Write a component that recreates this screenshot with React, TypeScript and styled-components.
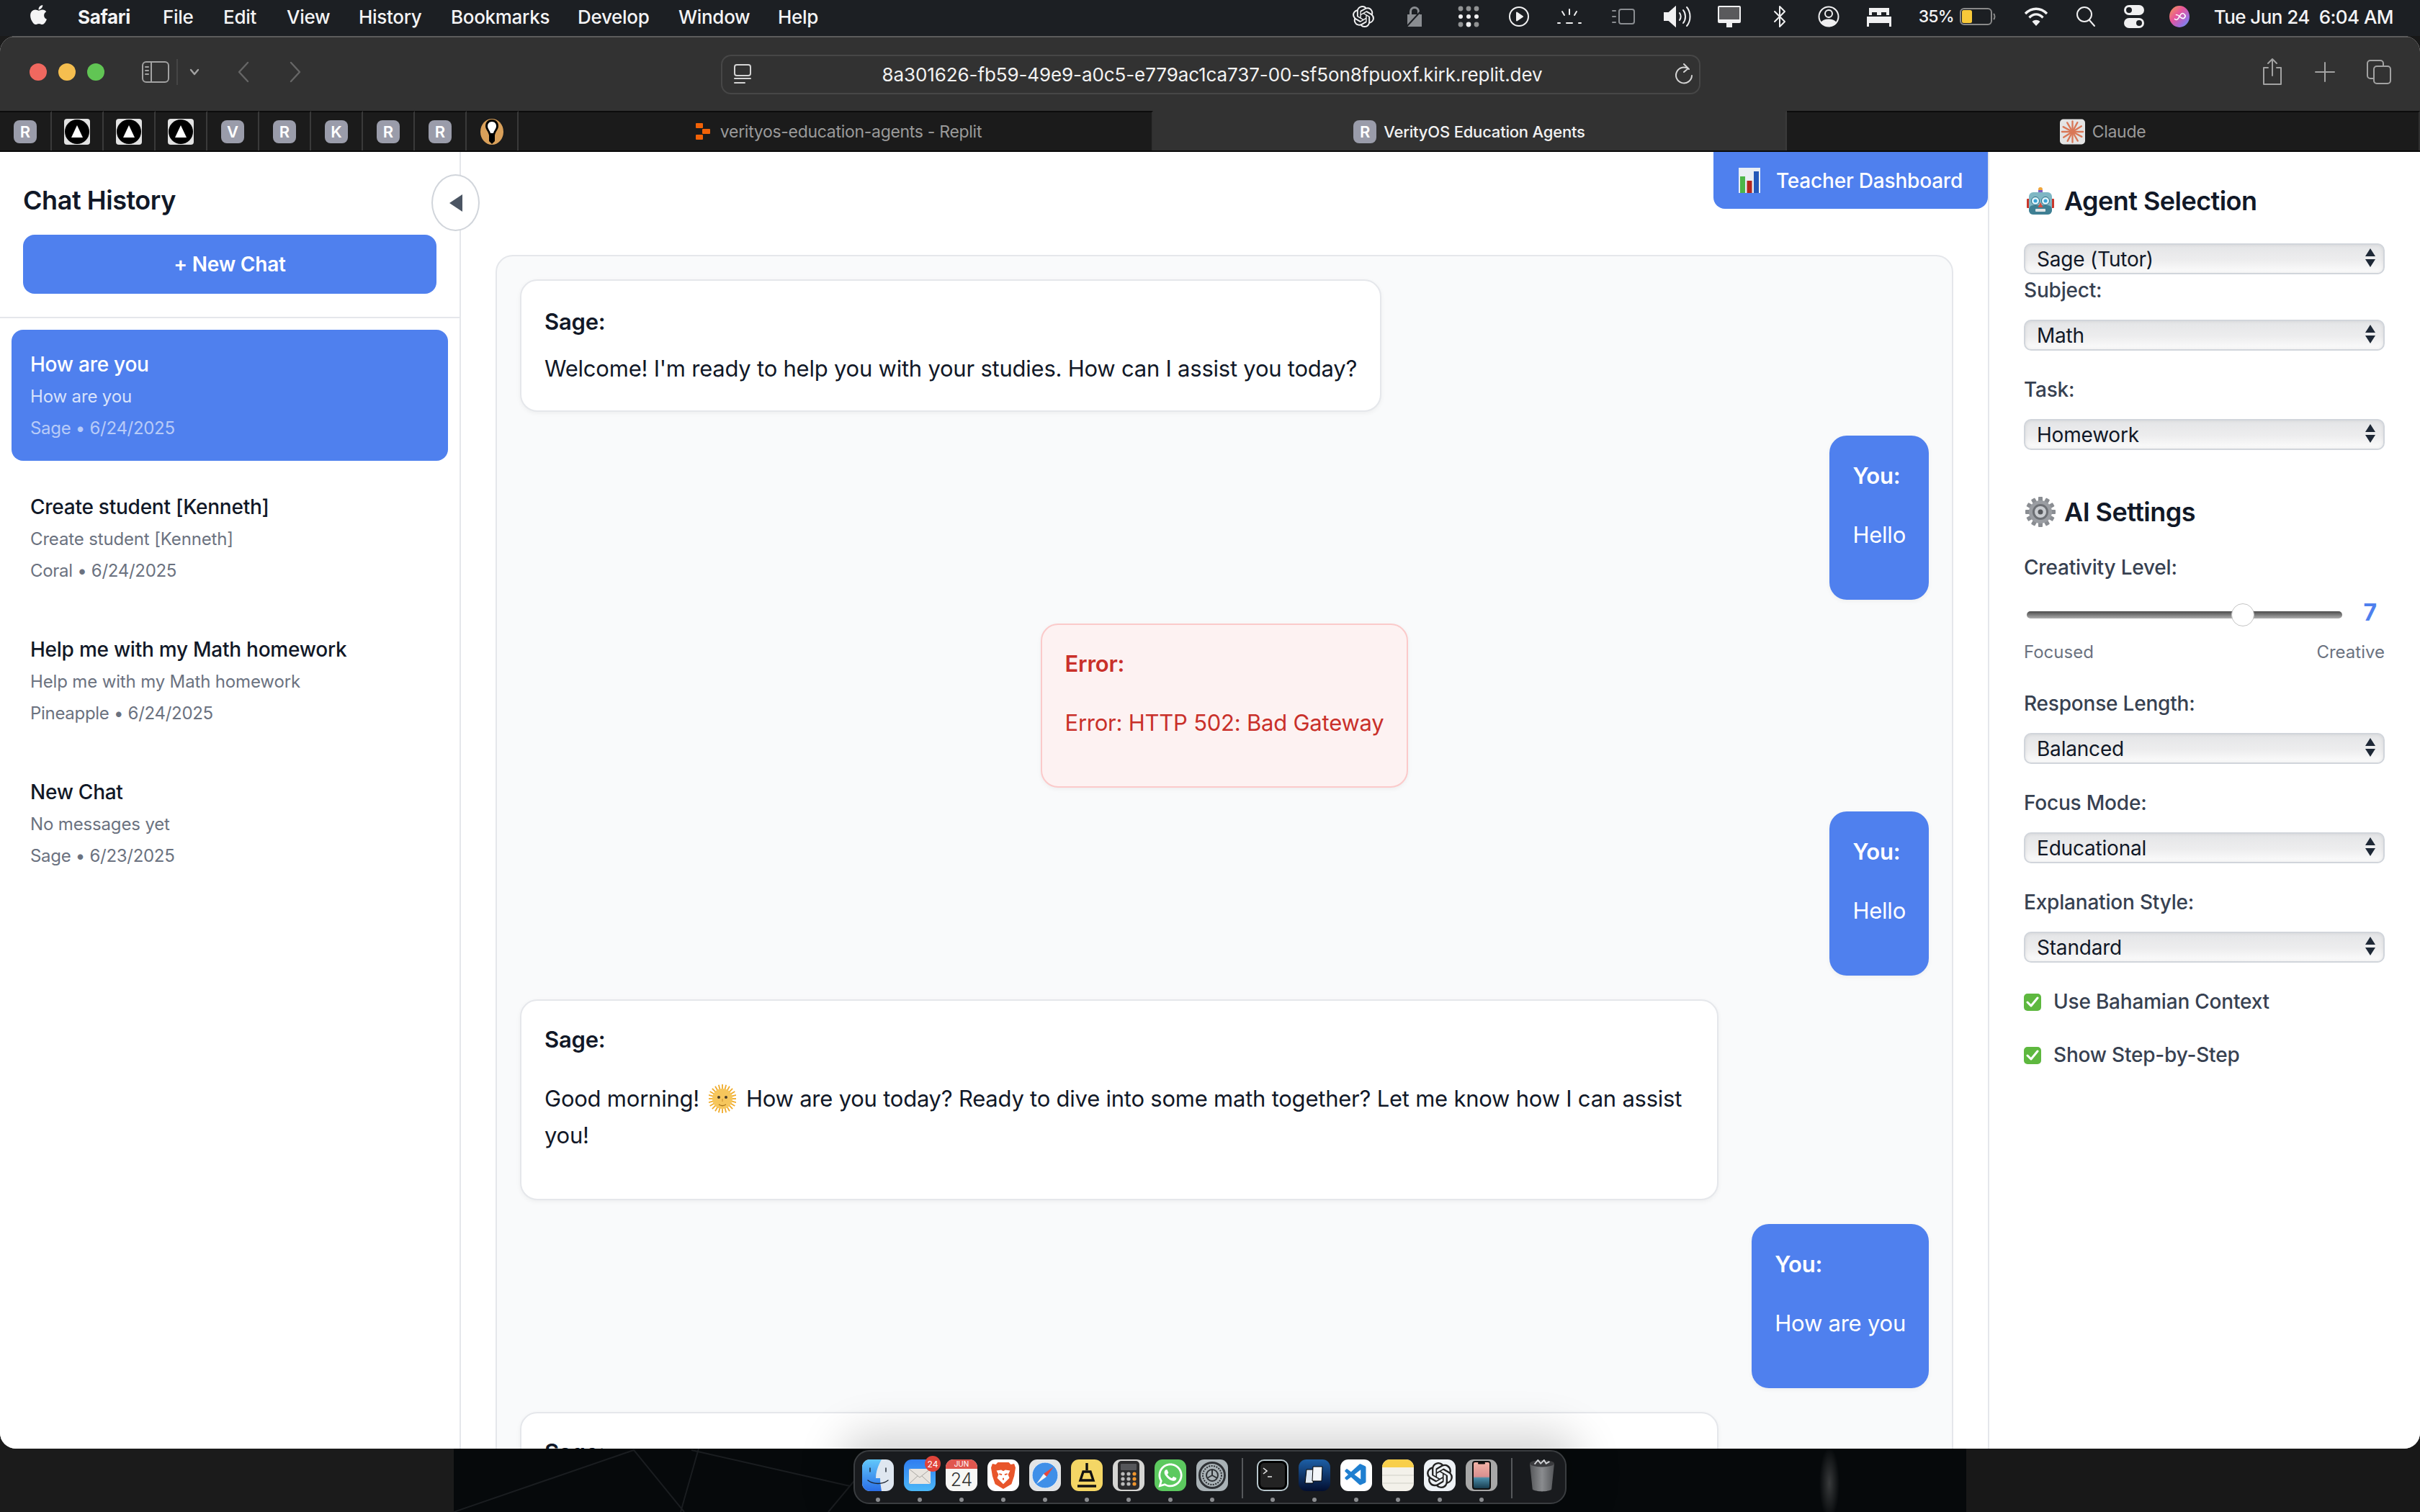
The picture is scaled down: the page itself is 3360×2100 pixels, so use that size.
// App.tsx

import React from "react"
import styled, { createGlobalStyle } from "styled-components"
import { FaApple, FaWhatsapp } from "react-icons/fa"
import { SiOpenai } from "react-icons/si"
import { VscVscode } from "react-icons/vsc"

const BLUE = "#4f80ee"

const GlobalStyle = createGlobalStyle`
  html, body {
    margin: 0;
    padding: 0;
    background: #0b0d10;
  }
  * {
    box-sizing: border-box;
  }
  body {
    font-family: Inter, "Noto Sans", "Liberation Sans", sans-serif;
    color: #111827;
  }
`

const Page = styled.div`
  width: 3360px;
  height: 2100px;
  display: flex;
  flex-direction: column;
  overflow: hidden;
  background:
    radial-gradient(ellipse 14px 50px at 2540px 2060px, rgba(150, 150, 150, 0.35), transparent),
    linear-gradient(90deg, #1b1b1b 0 630px, #06090b 630px 2730px, #181818 2730px);
`

/* ---------- menu bar ---------- */

const MenuBar = styled.header`
  height: 50px;
  flex: none;
  background: #1c1f23;
  padding-bottom: 4px;
  display: flex;
  align-items: center;
  justify-content: space-between;
  color: #f4f4f5;
  font-size: 26px;
  font-weight: 500;
`

const MenuLeft = styled.nav`
  display: flex;
  align-items: center;
  padding-left: 38px;
`

const MenuItem = styled.span<{ $w: number; $bold?: boolean }>`
  width: ${p => p.$w}px;
  font-weight: ${p => (p.$bold ? 700 : 500)};
  letter-spacing: -0.3px;
`

const MenuRight = styled.div`
  display: flex;
  align-items: center;
  padding-right: 37px;
`

const Slot = styled.span<{ $w: number; $dim?: boolean; $pad?: number }>`
  width: ${p => p.$w + (p.$pad || 0)}px;
  padding-right: ${p => p.$pad || 0}px;
  display: flex;
  align-items: center;
  justify-content: center;
  color: ${p => (p.$dim ? "#8a8d91" : "#f0f0f1")};
`

const BatteryText = styled.span`
  width: 53px;
  margin-left: 19px;
  font-size: 23px;
  font-weight: 500;
  letter-spacing: -0.7px;
`

const Clock = styled.span`
  margin-left: 17px;
  font-size: 26px;
  letter-spacing: -0.55px;
  white-space: nowrap;
`

/* ---------- browser window ---------- */

const BrowserWindow = styled.div`
  height: 1962px;
  flex: none;
  border-radius: 22px;
  overflow: hidden;
  display: flex;
  flex-direction: column;
  background: #fff;
`

const Toolbar = styled.div`
  height: 104px;
  flex: none;
  background: #323232;
  border-top: 2px solid #5c5c5c;
  display: flex;
  align-items: center;
  padding: 0 40px 6px 41px;
`

const Lights = styled.div`
  display: flex;
  gap: 16px;
`

const Light = styled.span<{ $c: string }>`
  width: 24px;
  height: 24px;
  border-radius: 50%;
  background: ${p => p.$c};
`

const ToolIcons = styled.div`
  display: flex;
  align-items: center;
  color: #a2a2a2;
  margin-left: 52px;
  width: 804px;
`

const SidebarDivider = styled.span`
  width: 2px;
  height: 36px;
  margin: 0 16px 0 10px;
  background: #454545;
`

const NavArrows = styled.div`
  display: flex;
  gap: 54px;
  margin-left: 52px;
  color: #666;
`

const UrlBar = styled.div`
  width: 1360px;
  height: 55px;
  flex: none;
  margin-top: 6px;
  border: 2px solid #474747;
  border-radius: 14px;
  display: flex;
  align-items: center;
  justify-content: space-between;
  padding: 0 8px 0 16px;
  color: #d4d4d4;
`

const UrlText = styled.span`
  color: #f2f2f2;
  font-size: 26px;
  letter-spacing: -0.1px;
  margin-right: 2px;
`

const ToolRight = styled.div`
  flex: 1;
  display: flex;
  justify-content: flex-end;
  align-items: center;
  gap: 44px;
  color: #a2a2a2;
`

const TabBar = styled.div`
  height: 57px;
  flex: none;
  display: flex;
  background: #1b1b1b;
  border-bottom: 2px solid #0a0a0a;
`

const PinnedTab = styled.div`
  width: 72px;
  background: #1b1b1b;
  border-top: 2px solid #0c0c0c;
  border-right: 2px solid #3a3a3a;
  display: flex;
  align-items: center;
  justify-content: center;
`

const Tab = styled.div<{ $w?: number; $active?: boolean; $gap?: number; $nudge?: number }>`
  width: ${p => (p.$w ? `${p.$w}px` : "auto")};
  flex: ${p => (p.$w ? "none" : 1)};
  padding-left: ${p => p.$nudge || 0}px;
  background: ${p => (p.$active ? "#323232" : "#1b1b1b")};
  border-top: 2px solid ${p => (p.$active ? "#323232" : "#0c0c0c")};
  border-right: 2px solid ${p => (p.$active ? "#3a3a3a" : "#303030")};
  display: flex;
  align-items: center;
  justify-content: center;
  gap: ${p => p.$gap || 10}px;
  font-size: ${p => (p.$active ? 22 : 23)}px;
  letter-spacing: ${p => (p.$active ? -0.2 : -0.3)}px;
  font-weight: ${p => (p.$active ? 500 : 400)};
  color: ${p => (p.$active ? "#f2f2f2" : "#9a9a9a")};
`

const LetterBadge = styled.span`
  width: 32px;
  height: 32px;
  border-radius: 8px;
  background: #9a9caa;
  color: #fff;
  font-size: 22px;
  font-weight: 600;
  letter-spacing: 0;
  display: flex;
  align-items: center;
  justify-content: center;
`

/* ---------- workspace ---------- */

const Workspace = styled.div`
  flex: 1;
  min-height: 0;
  display: flex;
  background: #fff;
`

const Sidebar = styled.aside`
  width: 640px;
  flex: none;
  position: relative;
  z-index: 2;
  border-right: 2px solid #e5e7eb;
`

const SidebarHead = styled.div`
  padding: 38px 32px 32px;
  border-bottom: 2px solid #e5e7eb;
`

const Heading = styled.h2`
  margin: 0;
  font-size: 36px;
  line-height: 58px;
  font-weight: 600;
  color: #111827;
  letter-spacing: -0.45px;
`

const NewChatButton = styled.button`
  width: 100%;
  height: 82px;
  margin-top: 19px;
  border: none;
  border-radius: 16px;
  background: ${BLUE};
  color: #fff;
  font-family: inherit;
  font-size: 28px;
  font-weight: 600;
  letter-spacing: -0.2px;
`

const CollapseToggle = styled.button`
  position: absolute;
  top: 31px;
  right: -28px;
  width: 67px;
  height: 79px;
  padding: 0;
  border: 2px solid #d1d5db;
  border-radius: 50%;
  background: #fff;
  display: flex;
  align-items: center;
  justify-content: center;
`

const ChatList = styled.div`
  padding: 16px;
  display: flex;
  flex-direction: column;
  gap: 16px;
`

const ChatItem = styled.div<{ $active?: boolean }>`
  height: 182px;
  padding: 26px;
  border-radius: 16px;
  background: ${p => (p.$active ? BLUE : "transparent")};
  color: ${p => (p.$active ? "#fff" : "#111827")};
`

const ChatTitle = styled.div`
  font-size: 28px;
  line-height: 45px;
  font-weight: 500;
  letter-spacing: -0.25px;
`

const ChatPreview = styled.div<{ $active?: boolean }>`
  margin-top: 3px;
  font-size: 24px;
  line-height: 38px;
  letter-spacing: -0.15px;
  color: ${p => (p.$active ? "rgba(255,255,255,.78)" : "#6b7280")};
`

const ChatMeta = styled.div<{ $active?: boolean }>`
  margin-top: 6px;
  font-size: 24px;
  line-height: 38px;
  letter-spacing: -0.3px;
  color: ${p => (p.$active ? "rgba(255,255,255,.6)" : "#6b7280")};
`

const Main = styled.main`
  flex: 1;
  min-width: 0;
  overflow: hidden;
  padding: 0 48px;
  display: flex;
  flex-direction: column;
`

const DashboardButton = styled.button`
  align-self: flex-end;
  flex: none;
  width: 381px;
  height: 79px;
  margin-right: -48px;
  border: none;
  border-radius: 0 0 16px 16px;
  background: ${BLUE};
  color: #fff;
  font-family: inherit;
  font-size: 28px;
  font-weight: 500;
  letter-spacing: -0.2px;
  display: flex;
  align-items: center;
  justify-content: center;
  gap: 22px;
`

const ChatLog = styled.section`
  flex: none;
  margin-top: 64px;
  padding: 32px;
  border: 2px solid #e5e7eb;
  border-radius: 24px;
  background: #f9fafb;
  display: flex;
  flex-direction: column;
  gap: 33px;
`

type Tone = "agent" | "user" | "error"

const toneStyles: Record<Tone, string> = {
  agent: "background:#fff;color:#111827;border:2px solid #e5e7eb;align-self:flex-start;",
  user: `background:${BLUE};color:#fff;border:none;padding:30px 32px 34px;align-self:flex-end;`,
  error: "background:#fdf2f2;color:#c9302a;border:2px solid #fbcaca;align-self:center;",
}

const Bubble = styled.article<{ $tone: Tone; $wide?: boolean; $tight?: boolean }>`
  padding: ${p => (p.$tight ? "31px 32px 33px" : "28px 32px 32px")};
  ${p => toneStyles[p.$tone]}
  width: ${p => (p.$wide ? "1664px" : "auto")};
  border-radius: 24px;
  box-shadow: 0 2px 6px rgba(0, 0, 0, 0.05);
  font-size: 31px;
  line-height: 51px;
  letter-spacing: -0.23px;
`

const Speaker = styled.div`
  font-weight: 600;
`

const Body = styled.p<{ $tight?: boolean }>`
  margin: ${p => (p.$tight ? "14px 0 0" : "31px 0 31px")};
`

const Sun = styled.svg`
  width: 38px;
  height: 40px;
  vertical-align: -9px;
  margin: 0 5px;
`

/* ---------- settings ---------- */

const Settings = styled.aside`
  width: 600px;
  flex: none;
  border-left: 2px solid #e5e7eb;
  padding: 39px 49px 0 48px;
`

const PanelHeading = styled.h3<{ $spaced?: boolean }>`
  margin: ${p => (p.$spaced ? "57px 0 26px" : "0 0 30px")};
  font-size: 36px;
  line-height: 58px;
  font-weight: 600;
  color: #111827;
  letter-spacing: -0.55px;
  display: flex;
  align-items: center;
  gap: 10px;
`

const EmojiSlot = styled.span`
  width: 46px;
  display: flex;
  justify-content: center;
`

const Field = styled.div<{ $gap?: number }>`
  margin-bottom: ${p => p.$gap ?? 32}px;
`

const FieldLabel = styled.label`
  display: block;
  margin-bottom: 18px;
  font-size: 28px;
  line-height: 45px;
  font-weight: 500;
  letter-spacing: -0.2px;
  color: #374151;
`

const SelectShell = styled.div`
  position: relative;
  height: 43px;

  svg {
    position: absolute;
    right: 13px;
    top: 7px;
    pointer-events: none;
  }
`

const NativeSelect = styled.select`
  width: 100%;
  height: 100%;
  appearance: none;
  border: 2px solid #d1d5db;
  border-radius: 10px;
  padding: 0 16px;
  background: linear-gradient(#e4e5e7 0%, #ededee 55%, #fcfcfc 100%);
  box-shadow: inset 0 0 5px rgba(0, 0, 0, 0.08);
  font-family: inherit;
  font-size: 28px;
  letter-spacing: -0.2px;
  color: #111827;
`

const SliderRow = styled.div`
  height: 50px;
  display: flex;
  align-items: center;
  justify-content: space-between;
  margin-bottom: 8px;
`

const Range = styled.input`
  appearance: none;
  width: 438px;
  height: 32px;
  margin: 0 0 0 4px;
  background: transparent;

  &::-webkit-slider-runnable-track {
    height: 10px;
    border-radius: 5px;
    background: linear-gradient(#4b4b4b, #aeaeae);
  }

  &::-webkit-slider-thumb {
    appearance: none;
    width: 32px;
    height: 32px;
    margin-top: -11px;
    border-radius: 50%;
    border: 1px solid #c4c4c4;
    background: #fff;
  }
`

const SliderValue = styled.span`
  margin-right: 11px;
  margin-bottom: 8px;
  font-size: 32px;
  font-weight: 700;
  color: ${BLUE};
`

const SliderEnds = styled.div`
  display: flex;
  justify-content: space-between;
  font-size: 24px;
  line-height: 38px;
  color: #6b7280;
`

const CheckRow = styled.div`
  display: flex;
  align-items: center;
  gap: 17px;
  margin-bottom: 29px;
  font-size: 28px;
  line-height: 45px;
  font-weight: 500;
  letter-spacing: -0.2px;
  color: #374151;
`

const CheckBox = styled.span`
  width: 24px;
  height: 24px;
  border-radius: 5px;
  background: #5eb83f;
  display: flex;
  align-items: center;
  justify-content: center;
`

/* ---------- dock ---------- */

const DockRow = styled.div`
  flex: 1;
  position: relative;
  z-index: 5;
  display: flex;
  justify-content: center;
  padding-top: 2px;
`

const WallpaperLines = styled.svg`
  position: absolute;
  left: 630px;
  top: 0;
  width: 2100px;
  height: 88px;
`

const Dock = styled.div`
  position: relative;
  width: 990px;
  height: 75px;
  padding: 0 3px;
  display: flex;
  border: 2px solid #3a3d40;
  border-radius: 22px;
  background: #191b1e;
  box-shadow: 0 -6px 60px 18px rgba(0, 0, 0, 0.17);
`

const DockItem = styled.div`
  width: 58px;
  flex: none;
  padding-top: 11px;
  display: flex;
  flex-direction: column;
  align-items: center;
  position: relative;
`

const DockDot = styled.span<{ $off?: boolean }>`
  width: 6px;
  height: 6px;
  margin-top: 9px;
  border-radius: 50%;
  background: ${p => (p.$off ? "transparent" : "#8b8d90")};
`

const DockBadge = styled.span`
  position: absolute;
  top: 6px;
  right: 0;
  width: 22px;
  height: 22px;
  border-radius: 50%;
  background: #e0443a;
  color: #fff;
  font-size: 12px;
  display: flex;
  align-items: center;
  justify-content: center;
`

const DockSep = styled.span`
  width: 2px;
  height: 56px;
  margin: 9px 12px 0 12px;
  background: #55585b;
`

const DockTile = styled.div<{ $bg: string; $fg?: string }>`
  width: 44px;
  height: 44px;
  border-radius: 11px;
  background: ${p => p.$bg};
  color: ${p => p.$fg || "#fff"};
  display: flex;
  align-items: center;
  justify-content: center;
  overflow: hidden;
`

const CalendarHead = styled.span`
  width: 100%;
  height: 13px;
  flex: none;
  background: #e0564e;
  color: #fff;
  font-size: 10px;
  line-height: 13px;
  text-align: center;
`

const CalendarDay = styled.span`
  color: #333;
  font-size: 25px;
  font-weight: 300;
  line-height: 30px;
`

const CalendarTile = styled(DockTile)`
  flex-direction: column;
  justify-content: flex-start;
`

/* ---------- drawings ---------- */

const Stroke: React.FC<{ w: number; h: number; vb: string; sw?: number; children: React.ReactNode }> = ({ w, h, vb, sw = 2, children }) => (
  <svg width={w} height={h} viewBox={vb} fill="none" stroke="currentColor" strokeWidth={sw} strokeLinecap="round" strokeLinejoin="round">
    {children}
  </svg>
)

const GridDots = () => (
  <svg width="32" height="32" viewBox="0 0 32 32" fill="currentColor">
    {[5, 16, 27].map(y => [5, 16, 27].map(x => <circle key={`${x}-${y}`} cx={x} cy={y} r={y === 16 ? 3 : 3.4} opacity={y === 16 ? 1 : x === 16 && y === 27 ? 1 : 0.55} />))}
  </svg>
)

const MenuIcons = () => (
  <>
    <Slot $w={62}><SiOpenai size={30} /></Slot>
    <Slot $w={80} $dim>
      <svg width="26" height="32" viewBox="0 0 26 32" fill="currentColor">
        <path d="M3 13h3V9a7 7 0 0 1 14 0v4h3v17H3zM9 13h8V9a4 4 0 0 0-8 0z" />
        <path d="M1 31 24 6" stroke="#1c1f23" strokeWidth="2" />
      </svg>
    </Slot>
    <Slot $w={70}><GridDots /></Slot>
    <Slot $w={70}>
      <Stroke w={30} h={30} vb="0 0 30 30">
        <circle cx="15" cy="15" r="13" />
        <path d="M12 9.5 20 15l-8 5.5z" fill="currentColor" />
      </Stroke>
    </Slot>
    <Slot $w={71}>
      <Stroke w={36} h={24} vb="0 0 36 24">
        <path d="M18 2v7M8 5l3 5M28 5l-3 5M2 21h3M14 21h8M31 21h3" />
      </Stroke>
    </Slot>
    <Slot $w={78} $dim>
      <Stroke w={34} h={24} vb="0 0 34 24">
        <rect x="11" y="2" width="21" height="20" rx="3" />
        <path d="M2 4h4M2 12h4M2 20h4" />
      </Stroke>
    </Slot>
    <Slot $w={72}>
      <svg width="40" height="30" viewBox="0 0 40 30" fill="none" stroke="currentColor" strokeWidth="2" strokeLinecap="round">
        <path d="M2 10h6l9-8v26l-9-8H2z" fill="currentColor" />
        <path d="M23 10c2 3 2 7 0 10M28 6c4 5 4 13 0 18M33 2c6 7 6 19 0 26" />
      </svg>
    </Slot>
    <Slot $w={72}>
      <svg width="34" height="32" viewBox="0 0 34 32" fill="currentColor">
        <rect x="1" y="1" width="32" height="24" rx="2" fill="#f0f0f1" />
        <rect x="3" y="3" width="28" height="17" fill="#5a5a5c" />
        <rect x="13" y="25" width="8" height="6" />
      </svg>
    </Slot>
    <Slot $w={68}>
      <Stroke w={18} h={32} vb="0 0 18 32">
        <path d="M2 9 16 23 9 30V2l7 7L2 23" />
      </Stroke>
    </Slot>
    <Slot $w={68}>
      <svg width="30" height="32" viewBox="0 0 30 32" fill="none" stroke="currentColor" strokeWidth="2">
        <circle cx="15" cy="16" r="13.5" />
        <circle cx="15" cy="12" r="5" />
        <path d="M5 25c3-6 17-6 20 0-5 5-15 5-20 0z" fill="currentColor" />
      </svg>
    </Slot>
    <Slot $w={72}>
      <svg width="36" height="28" viewBox="0 0 36 28" fill="currentColor">
        <path d="M4 2h28v10h-4V8h-7v4h-6V8H8v4H4zM1 14h34v14h-3v-5H4v5H1z" />
      </svg>
    </Slot>
    <BatteryText>35%</BatteryText>
    <Slot $w={58} $pad={18}>
      <svg width="50" height="24" viewBox="0 0 50 24" fill="none">
        <rect x="1" y="1" width="43" height="22" rx="5" stroke="#8a8a8a" strokeWidth="2" />
        <rect x="3" y="3" width="14" height="18" rx="2.5" fill="#f8c93a" />
        <path d="M47 8c2 2 2 6 0 8" stroke="#8a8a8a" strokeWidth="2" />
      </svg>
    </Slot>
    <Slot $w={68}>
      <svg width="34" height="28" viewBox="0 0 34 28" fill="none" stroke="currentColor" strokeWidth="3.4">
        <path d="M2 10c9-9 21-9 30 0M7.5 15.5c6-6 13-6 19 0" />
        <path d="M17 27l-5.5-6c3-3 8-3 11 0z" fill="currentColor" stroke="none" />
      </svg>
    </Slot>
    <Slot $w={70}>
      <Stroke w={28} h={30} vb="0 0 28 30">
        <circle cx="12" cy="12" r="10" />
        <path d="m19 20 7 8" />
      </Stroke>
    </Slot>
    <Slot $w={64}>
      <svg width="28" height="34" viewBox="0 0 28 34" fill="currentColor">
        <path fillRule="evenodd" d="M7 1h14a6 6 0 0 1 0 14H7A6 6 0 0 1 7 1zm0 3a4 4 0 0 0 0 8 4 4 0 0 0 0-8z" />
        <path fillRule="evenodd" d="M7 19h14a6 6 0 0 1 0 14H7a6 6 0 0 1 0-14zm14 3a4 4 0 0 0 0 8 4 4 0 0 0 0-8z" />
      </svg>
    </Slot>
    <Slot $w={62}>
      <svg width="30" height="32" viewBox="0 0 30 32">
        <defs>
          <linearGradient id="siri" x1="0" y1="0" x2="1" y2="1">
            <stop offset="0" stopColor="#f0a050" />
            <stop offset="0.4" stopColor="#e8559a" />
            <stop offset="0.75" stopColor="#9a6fe0" />
            <stop offset="1" stopColor="#4fb0ee" />
          </linearGradient>
        </defs>
        <ellipse cx="15" cy="16" rx="14" ry="15" fill="url(#siri)" />
        <path d="M8 19c3 3 5 1 7-3s4-6 7-3-1 7-4 5-6-6-8-4" fill="none" stroke="#fff" strokeWidth="1.6" />
      </svg>
    </Slot>
  </>
)

const VercelishIcon = () => (
  <svg width="36" height="36" viewBox="0 0 36 36">
    <rect width="36" height="36" rx="4" fill="#e2e2e2" />
    <circle cx="18" cy="18" r="17" fill="#000" />
    <path d="M18 9 26 26H10z" fill="#fff" />
  </svg>
)

const BulbIcon = () => (
  <svg width="32" height="36" viewBox="0 0 32 36">
    <ellipse cx="16" cy="18" rx="16" ry="18" fill="#d9a05a" />
    <path d="M16 1c6 0 9 4 9 9 0 5-4 7-5 13v8l-4 4-4-4v-8c-1-6-5-8-5-13 0-5 3-9 9-9z" fill="#000" />
    <path d="M16 4c4 0 6 3 6 6 0 4-3 6-4 10h-4c-1-4-4-6-4-10 0-3 2-6 6-6z" fill="#fff" />
  </svg>
)

const ReplitMark = () => (
  <svg width="20" height="23" viewBox="0 0 20 23" fill="#f26207">
    <rect width="10" height="7" rx="1" />
    <rect y="8" x="9" width="11" height="7" rx="1" />
    <rect y="16" width="10" height="7" rx="1" />
  </svg>
)

const ClaudeMark = () => (
  <svg width="35" height="36" viewBox="0 0 36 36">
    <rect width="36" height="36" rx="5" fill="#e4e4e4" />
    <g stroke="#d97757" strokeWidth="2.4" strokeLinecap="round">
      {[0, 28, 58, 90, 118, 150, 180, 208, 238, 270, 298, 330].map(a => (
        <line key={a} x1="18" y1="18" x2="18" y2="3" transform={`rotate(${a} 18 18)`} />
      ))}
    </g>
  </svg>
)

const RobotEmoji = () => (
  <svg width="38" height="40" viewBox="0 0 38 40">
    <circle cx="19" cy="4" r="3" fill="#f0a63c" />
    <rect x="16" y="5" width="6" height="4" fill="#7c5cc4" />
    <rect x="0" y="17" width="4" height="13" rx="1" fill="#c9372c" />
    <rect x="34" y="17" width="4" height="13" rx="1" fill="#c9372c" />
    <rect x="3" y="8" width="32" height="31" rx="6" fill="#7fb6c4" />
    <rect x="3" y="26" width="32" height="13" rx="6" fill="#3f7f93" />
    <circle cx="12" cy="20" r="5.5" fill="#dff4fb" stroke="#2c6b80" />
    <circle cx="26" cy="20" r="5.5" fill="#dff4fb" stroke="#2c6b80" />
    <circle cx="12" cy="20" r="2.5" fill="#37a3d8" />
    <circle cx="26" cy="20" r="2.5" fill="#37a3d8" />
    <path d="m19 22 3.5 7h-7z" fill="#d9503f" />
    <rect x="12" y="31" width="14" height="4" rx="1" fill="#dfe5e7" />
  </svg>
)

const GearEmoji = () => (
  <svg width="42" height="42" viewBox="0 0 42 42">
    <g fill="#8a8d92">
      {[0, 30, 60, 90, 120, 150, 180, 210, 240, 270, 300, 330].map(a => (
        <rect key={a} x="18" y="0" width="6" height="8" rx="1" transform={`rotate(${a} 21 21)`} />
      ))}
    </g>
    <circle cx="21" cy="21" r="16" fill="#9a9da2" />
    <circle cx="21" cy="21" r="11" fill="#6d7075" />
    <circle cx="21" cy="21" r="8" fill="#c9ccd0" />
    <circle cx="21" cy="21" r="3.5" fill="#55585c" />
  </svg>
)

const ChartEmoji = () => (
  <svg width="30" height="35" viewBox="0 0 30 35">
    <rect width="30" height="35" fill="#e8eef4" />
    <rect x="2" y="12" width="7" height="23" fill="#4cb648" />
    <rect x="11.5" y="18" width="7" height="17" fill="#b4261c" />
    <rect x="21" y="5" width="7" height="30" fill="#2458b8" />
  </svg>
)

const SunEmoji = () => (
  <Sun viewBox="0 0 38 40">
    <g stroke="#f0ab2a" strokeWidth="1.8">
      {Array.from({ length: 24 }, (_, i) => i * 15).map(a => (
        <line key={a} x1="19" y1="0" x2="19" y2="8" transform={`rotate(${a} 19 20)`} />
      ))}
    </g>
    <circle cx="19" cy="20" r="14" fill="#f6c65c" />
    <circle cx="14" cy="18" r="2" fill="#4a3d28" />
    <circle cx="24" cy="18" r="2" fill="#4a3d28" />
    <path d="M19 20v4" stroke="#d79a3a" strokeWidth="1.4" />
    <path d="M14 28c3 2 7 2 10 0" stroke="#a8741c" strokeWidth="1.4" fill="none" />
  </Sun>
)

const UpDown = () => (
  <svg width="14" height="26" viewBox="0 0 14 26" fill="#1f2937">
    <path d="M7 0 14 11H0zM7 26 0 15h14z" />
  </svg>
)

const Finder = () => (
  <svg width="44" height="44" viewBox="0 0 44 44">
    <defs>
      <linearGradient id="finderbg" x1="0" y1="0" x2="0" y2="1">
        <stop offset="0" stopColor="#62c8fb" />
        <stop offset="1" stopColor="#2a6ee6" />
      </linearGradient>
    </defs>
    <rect width="44" height="44" rx="11" fill="#dfe7f0" />
    <path d="M11 0h16c-5 9-8 17-8 26h6c0 6 1 12 2 18H11A11 11 0 0 1 0 33V11A11 11 0 0 1 11 0z" fill="url(#finderbg)" />
    <path d="M11 12v5M33 12v5M8 29c8 6 20 6 28 0" stroke="#1c2430" strokeWidth="1.4" fill="none" strokeLinecap="round" />
  </svg>
)

const Mail = () => (
  <svg width="44" height="44" viewBox="0 0 44 44">
    <defs>
      <linearGradient id="mailbg" x1="0" y1="0" x2="0" y2="1">
        <stop offset="0" stopColor="#2f7df0" />
        <stop offset="1" stopColor="#4cb8f8" />
      </linearGradient>
    </defs>
    <rect width="44" height="44" rx="11" fill="url(#mailbg)" />
    <rect x="7" y="13" width="30" height="21" rx="1.5" fill="#e8e4df" />
    <path d="M7 13 22 25 37 13M7 34l12-11M37 34 25 23" stroke="#a8a6a2" fill="none" />
  </svg>
)

const Brave = () => (
  <svg width="34" height="38" viewBox="0 0 36 40">
    <path d="M10 1h16l3 3 5-1 2 6-2 12-4 12-12 7-12-7-4-12L0 9l2-6 5 1z" fill="#e8562b" />
    <path d="M8 13l7-1 3 2 3-2 7 1-3 6 2 5-9 9-9-9 2-5z" fill="#fff" />
    <path d="M12 18l4 1M24 18l-4 1M18 24v3" stroke="#e8562b" strokeWidth="2" />
  </svg>
)

const Compass = () => (
  <svg width="38" height="38" viewBox="0 0 38 38">
    <circle cx="19" cy="19" r="18" fill="#3f8fe8" stroke="#eef2f6" />
    <path d="M31 7 21 21l-4-4z" fill="#e8473a" />
    <path d="M7 31l10-14 4 4z" fill="#f2f4f6" />
  </svg>
)

const BrushApp = () => (
  <svg width="28" height="36" viewBox="0 0 28 36" fill="none" stroke="#111" strokeWidth="3.4">
    <path d="M14 1v10" />
    <path d="M9 13h10l4 12H5zM1 33h26" />
  </svg>
)

const Calculator = () => (
  <svg width="30" height="40" viewBox="0 0 30 40">
    <rect width="30" height="40" rx="5" fill="#2b2b2d" />
    <rect x="4" y="4" width="22" height="9" rx="1" fill="#55565a" />
    {[18, 25, 32].map(y =>
      [7, 15, 23].map(x => <circle key={`${x}${y}`} cx={x} cy={y} r="2.6" fill={x === 23 ? "#f0962e" : "#bbb"} />)
    )}
  </svg>
)

const SettingsCog = () => (
  <svg width="38" height="38" viewBox="0 0 38 38" fill="none" stroke="#2f3236">
    <circle cx="19" cy="19" r="17.5" strokeWidth="3" />
    <circle cx="19" cy="19" r="13" strokeWidth="2" strokeDasharray="2 1.5" />
    <circle cx="19" cy="19" r="8" strokeWidth="2" />
    <path d="M19 19V11M19 19l7 4M19 19l-7 4" strokeWidth="2" />
  </svg>
)

const TerminalTile = () => (
  <svg width="44" height="44" viewBox="0 0 44 44">
    <rect x="1" y="1" width="42" height="42" rx="9" fill="#000" stroke="#b7c6cc" strokeWidth="2" />
    <rect x="5" y="5" width="34" height="34" rx="5" fill="#232323" />
    <path d="M9 12l5 4-5 4M15 24h6" stroke="#e8e8e8" strokeWidth="1.6" fill="none" />
  </svg>
)

const CardsApp = () => (
  <svg width="44" height="44" viewBox="0 0 44 44">
    <defs>
      <linearGradient id="cards" x1="0" y1="0" x2="0" y2="1">
        <stop offset="0" stopColor="#1d5fa6" />
        <stop offset="1" stopColor="#020e30" />
      </linearGradient>
    </defs>
    <rect width="44" height="44" rx="11" fill="url(#cards)" />
    <path d="M11 14h12l-3 19H9z" fill="#dfe8f2" stroke="#000" />
    <path d="M20 10h13l-1 20H19z" fill="#f4f7fa" stroke="#000" />
  </svg>
)

const NotesTile = () => (
  <svg width="44" height="44" viewBox="0 0 44 44">
    <rect width="44" height="44" rx="11" fill="#f3f1ea" />
    <path d="M0 11A11 11 0 0 1 11 0h22a11 11 0 0 1 11 11z" fill="#f8cf4b" />
    <path d="M0 22h44M0 33h44" stroke="#dcdad2" strokeWidth="1.5" />
  </svg>
)

const PhoneTile = () => (
  <svg width="26" height="40" viewBox="0 0 26 40">
    <defs>
      <linearGradient id="phone" x1="0" y1="0" x2="0" y2="1">
        <stop offset="0" stopColor="#f4b5a8" />
        <stop offset="0.55" stopColor="#d98f8f" />
        <stop offset="0.6" stopColor="#4a8ca8" />
        <stop offset="1" stopColor="#16384a" />
      </linearGradient>
    </defs>
    <rect x="1" y="1" width="24" height="38" rx="3" fill="url(#phone)" stroke="#111" strokeWidth="2" />
    <rect x="8" y="2" width="10" height="2.5" rx="1" fill="#111" />
  </svg>
)

const TrashCan = () => (
  <svg width="38" height="48" viewBox="0 0 38 48">
    <defs>
      <linearGradient id="trash" x1="0" y1="0" x2="1" y2="0">
        <stop offset="0" stopColor="#55575a" />
        <stop offset="0.5" stopColor="#8a8c8f" />
        <stop offset="1" stopColor="#55575a" />
      </linearGradient>
    </defs>
    <path d="M1 6h36l-4 38c-4 4-24 4-28 0z" fill="url(#trash)" />
    <ellipse cx="19" cy="6" rx="18" ry="5" fill="#3a3b3e" />
    <path d="M8 7l5-6 4 5 5-5 3 5 5-3" stroke="#cfd1d4" strokeWidth="2" fill="none" />
  </svg>
)

/* ---------- data ---------- */

const pinnedTabs: React.ReactNode[] = [
  <LetterBadge key="a">R</LetterBadge>,
  <VercelishIcon key="b" />,
  <VercelishIcon key="c" />,
  <VercelishIcon key="d" />,
  <LetterBadge key="e">V</LetterBadge>,
  <LetterBadge key="f">R</LetterBadge>,
  <LetterBadge key="g">K</LetterBadge>,
  <LetterBadge key="h">R</LetterBadge>,
  <LetterBadge key="i">R</LetterBadge>,
  <BulbIcon key="j" />,
]

const chats = [
  { title: "How are you", preview: "How are you", meta: "Sage • 6/24/2025", active: true },
  { title: "Create student [Kenneth]", preview: "Create student [Kenneth]", meta: "Coral • 6/24/2025" },
  { title: "Help me with my Math homework", preview: "Help me with my Math homework", meta: "Pineapple • 6/24/2025" },
  { title: "New Chat", preview: "No messages yet", meta: "Sage • 6/23/2025" },
]

const DropDown: React.FC<{ value: string }> = ({ value }) => (
  <SelectShell>
    <NativeSelect defaultValue={value}>
      <option>{value}</option>
    </NativeSelect>
    <UpDown />
  </SelectShell>
)

const SelectField: React.FC<{ label: string; value: string }> = ({ label, value }) => (
  <Field>
    <FieldLabel>{label}</FieldLabel>
    <DropDown value={value} />
  </Field>
)

const Check: React.FC<{ label: string }> = ({ label }) => (
  <CheckRow>
    <CheckBox>
      <svg width="18" height="16" viewBox="0 0 18 16" fill="none" stroke="#fff" strokeWidth="3" strokeLinecap="round" strokeLinejoin="round">
        <path d="M2 8l5 5 9-11" />
      </svg>
    </CheckBox>
    {label}
  </CheckRow>
)

const App: React.FC = () => {
  return (
    <Page>
      <GlobalStyle />
      <MenuBar>
        <MenuLeft>
          <MenuItem $w={70}><FaApple size={31} /></MenuItem>
          <MenuItem $w={118} $bold>Safari</MenuItem>
          <MenuItem $w={84}>File</MenuItem>
          <MenuItem $w={88}>Edit</MenuItem>
          <MenuItem $w={100}>View</MenuItem>
          <MenuItem $w={128}>History</MenuItem>
          <MenuItem $w={176}>Bookmarks</MenuItem>
          <MenuItem $w={140}>Develop</MenuItem>
          <MenuItem $w={138}>Window</MenuItem>
          <MenuItem $w={60}>Help</MenuItem>
        </MenuLeft>
        <MenuRight>
          <MenuIcons />
          <Clock>Tue Jun 24&nbsp; 6:04 AM</Clock>
        </MenuRight>
      </MenuBar>

      <BrowserWindow>
        <Toolbar>
          <Lights>
            <Light $c="#f0685f" />
            <Light $c="#f5be4f" />
            <Light $c="#61c554" />
          </Lights>
          <ToolIcons>
            <Stroke w={38} h={30} vb="0 0 38 30">
              <rect x="1" y="1" width="36" height="28" rx="5" />
              <path d="M13 1v28M5 8h4M5 13h4M5 18h4" />
            </Stroke>
            <SidebarDivider />
            <Stroke w={14} h={10} vb="0 0 14 10" sw={2.4}>
              <path d="m2 2 5 6 5-6" />
            </Stroke>
            <NavArrows>
              <Stroke w={18} h={30} vb="0 0 18 30" sw={2.4}>
                <path d="M15 2 3 15l12 13" />
              </Stroke>
              <Stroke w={18} h={30} vb="0 0 18 30" sw={2.4}>
                <path d="m3 2 12 13L3 28" />
              </Stroke>
            </NavArrows>
          </ToolIcons>
          <UrlBar>
            <Stroke w={24} h={28} vb="0 0 24 28">
              <rect x="1" y="1" width="22" height="15" rx="3" />
              <path d="M1 20h22M1 26h14" />
            </Stroke>
            <UrlText>8a301626-fb59-49e9-a0c5-e779ac1ca737-00-sf5on8fpuoxf.kirk.replit.dev</UrlText>
            <Stroke w={26} h={30} vb="0 0 26 30">
              <path d="M20 8a11 11 0 1 0 4 9M13 1l6 6-6 5" />
            </Stroke>
          </UrlBar>
          <ToolRight>
            <Stroke w={30} h={38} vb="0 0 30 38">
              <path d="M9 13H3v23h24V13h-6M15 24V2M9 7l6-6 6 6" />
            </Stroke>
            <Stroke w={28} h={28} vb="0 0 28 28">
              <path d="M14 1v26M1 14h26" />
            </Stroke>
            <Stroke w={34} h={34} vb="0 0 34 34">
              <rect x="10" y="9" width="23" height="24" rx="4" />
              <path d="M10 26H5a4 4 0 0 1-4-4V5a4 4 0 0 1 4-4h14a4 4 0 0 1 4 4v4" />
            </Stroke>
          </ToolRight>
        </Toolbar>

        <TabBar>
          {pinnedTabs.map((icon, i) => (
            <PinnedTab key={i}>{icon}</PinnedTab>
          ))}
          <Tab $w={881} $gap={14} $nudge={10}>
            <ReplitMark />
            verityos-education-agents - Replit
          </Tab>
          <Tab $w={880} $active>
            <LetterBadge>R</LetterBadge>
            VerityOS Education Agents
          </Tab>
          <Tab>
            <ClaudeMark />
            Claude
          </Tab>
        </TabBar>

        <Workspace>
          <Sidebar>
            <SidebarHead>
              <Heading>Chat History</Heading>
              <NewChatButton>+ New Chat</NewChatButton>
            </SidebarHead>
            <CollapseToggle aria-label="Collapse">
              <svg width="18" height="24" viewBox="0 0 18 24" fill="#4b5563">
                <path d="M18 0v24L0 12z" />
              </svg>
            </CollapseToggle>
            <ChatList>
              {chats.map(chat => (
                <ChatItem key={chat.title} $active={chat.active}>
                  <ChatTitle>{chat.title}</ChatTitle>
                  <ChatPreview $active={chat.active}>{chat.preview}</ChatPreview>
                  <ChatMeta $active={chat.active}>{chat.meta}</ChatMeta>
                </ChatItem>
              ))}
            </ChatList>
          </Sidebar>

          <Main>
            <DashboardButton>
              <ChartEmoji />
              Teacher Dashboard
            </DashboardButton>
            <ChatLog>
              <Bubble $tone="agent" $tight>
                <Speaker>Sage:</Speaker>
                <Body $tight>Welcome! I'm ready to help you with your studies. How can I assist you today?</Body>
              </Bubble>
              <Bubble $tone="user">
                <Speaker>You:</Speaker>
                <Body>Hello</Body>
              </Bubble>
              <Bubble $tone="error">
                <Speaker>Error:</Speaker>
                <Body>Error: HTTP 502: Bad Gateway</Body>
              </Bubble>
              <Bubble $tone="user">
                <Speaker>You:</Speaker>
                <Body>Hello</Body>
              </Bubble>
              <Bubble $tone="agent" $wide>
                <Speaker>Sage:</Speaker>
                <Body>
                  Good morning! <SunEmoji /> How are you today? Ready to dive into some math together? Let me know how I can assist you!
                </Body>
              </Bubble>
              <Bubble $tone="user">
                <Speaker>You:</Speaker>
                <Body>How are you</Body>
              </Bubble>
              <Bubble $tone="agent" $wide>
                <Speaker>Sage:</Speaker>
              </Bubble>
            </ChatLog>
          </Main>

          <Settings>
            <PanelHeading><EmojiSlot><RobotEmoji /></EmojiSlot> Agent Selection</PanelHeading>
            <DropDown value="Sage (Tutor)" />
            <SelectField label="Subject:" value="Math" />
            <SelectField label="Task:" value="Homework" />

            <PanelHeading $spaced><EmojiSlot><GearEmoji /></EmojiSlot> AI Settings</PanelHeading>
            <Field $gap={30}>
              <FieldLabel>Creativity Level:</FieldLabel>
              <SliderRow>
                <Range type="range" min={0} max={10} defaultValue={7} />
                <SliderValue>7</SliderValue>
              </SliderRow>
              <SliderEnds>
                <span>Focused</span>
                <span>Creative</span>
              </SliderEnds>
            </Field>
            <SelectField label="Response Length:" value="Balanced" />
            <SelectField label="Focus Mode:" value="Educational" />
            <SelectField label="Explanation Style:" value="Standard" />
            <Check label="Use Bahamian Context" />
            <Check label="Show Step-by-Step" />
          </Settings>
        </Workspace>
      </BrowserWindow>

      <DockRow>
        <WallpaperLines viewBox="0 0 2100 88" fill="none" stroke="#1a1d20" strokeWidth="2">
          <path d="M0 88 250 2l70 86M340 0l-25 88M330 2l220 50M520 88 560 40" />
        </WallpaperLines>
        <Dock>
          <DockItem><Finder /><DockDot /></DockItem>
          <DockItem><Mail /><DockBadge>24</DockBadge><DockDot /></DockItem>
          <DockItem>
            <CalendarTile $bg="#f7f7f5">
              <CalendarHead>JUN</CalendarHead>
              <CalendarDay>24</CalendarDay>
            </CalendarTile>
            <DockDot />
          </DockItem>
          <DockItem><DockTile $bg="#fff"><Brave /></DockTile><DockDot /></DockItem>
          <DockItem><DockTile $bg="#e2e4e6"><Compass /></DockTile><DockDot /></DockItem>
          <DockItem><DockTile $bg="#f4d665"><BrushApp /></DockTile><DockDot /></DockItem>
          <DockItem><DockTile $bg="#d5d5d3"><Calculator /></DockTile><DockDot /></DockItem>
          <DockItem><DockTile $bg="#5cc95f"><FaWhatsapp size={38} /></DockTile><DockDot /></DockItem>
          <DockItem><DockTile $bg="#a9b2b6"><SettingsCog /></DockTile><DockDot /></DockItem>
          <DockSep />
          <DockItem><TerminalTile /><DockDot /></DockItem>
          <DockItem><CardsApp /><DockDot /></DockItem>
          <DockItem><DockTile $bg="#fff" $fg="#1f7fd0"><VscVscode size={36} /></DockTile><DockDot /></DockItem>
          <DockItem><NotesTile /><DockDot /></DockItem>
          <DockItem><DockTile $bg="#eef2f6" $fg="#222"><SiOpenai size={36} /></DockTile><DockDot /></DockItem>
          <DockItem><DockTile $bg="#a8a8a8"><PhoneTile /></DockTile><DockDot /></DockItem>
          <DockSep />
          <DockItem><TrashCan /><DockDot $off /></DockItem>
        </Dock>
      </DockRow>
    </Page>
  )
}

export default App
